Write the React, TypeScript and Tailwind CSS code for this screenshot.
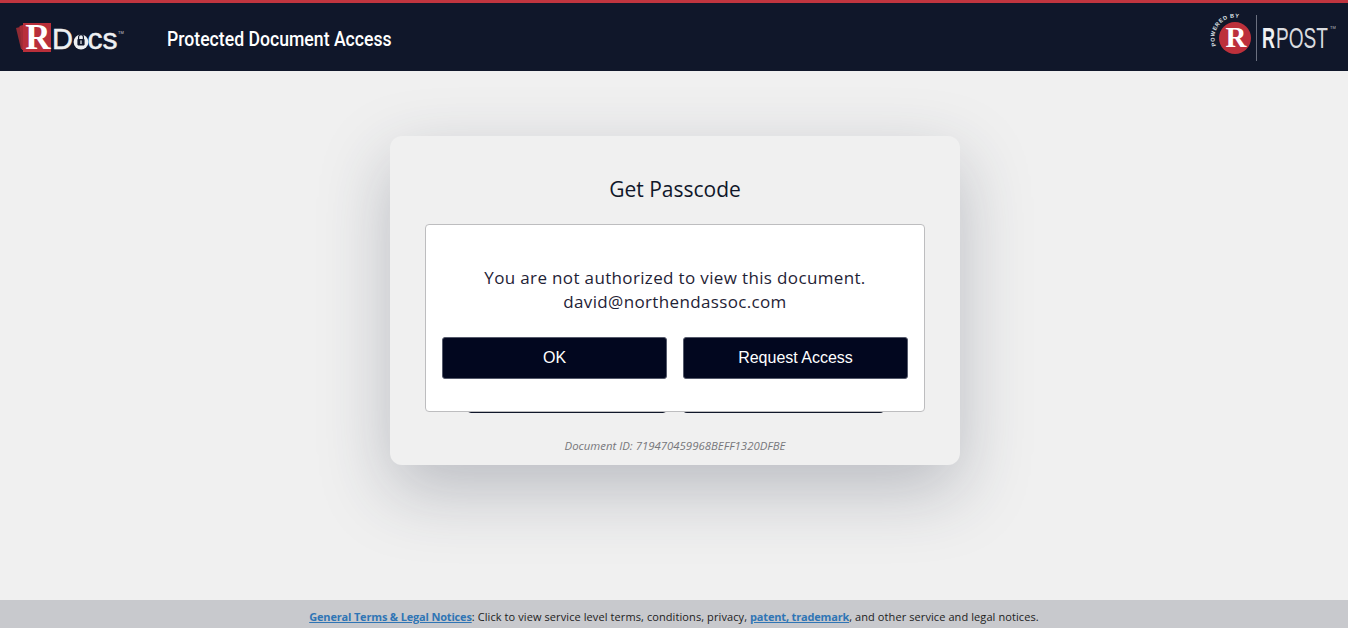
import React from 'react';

const RDocsLogo: React.FC = () => (
  <svg width="110" height="30" viewBox="0 0 110 30" className="mt-[2px] block">
    <path d="M0 5 L4 4 L7 26 L5 26 Z" fill="#8f2a33" />
    <path d="M3.5 3 L7 2 L7 27 L6 27 Z" fill="#a52c36" />
    <rect x="7" y="0" width="28" height="29" fill="#b92f3a" />
    <text x="22" y="25.5" textAnchor="middle" fontFamily="'Liberation Serif', serif" fontWeight="700" fontSize="35" fill="#ffffff">R</text>
    <text x="36" y="25.5" fontFamily="'Liberation Sans', sans-serif" fontSize="29" fill="#eef0f2" stroke="#eef0f2" strokeWidth="0.5">D</text>
    <circle cx="65" cy="19" r="7.4" fill="#eef0f2" />
    <path d="M62.6 16 v-2 a2.4 2.4 0 0 1 4.8 0 v2" fill="none" stroke="#10172a" strokeWidth="1.2" />
    <rect x="61.4" y="16" width="7.2" height="6.4" rx="0.8" fill="#10172a" />
    <rect x="64.4" y="17.4" width="1.2" height="3.6" fill="#eef0f2" />
    <text x="71.5" y="25.5" fontFamily="'Liberation Sans', sans-serif" fontSize="30" fill="#eef0f2" stroke="#eef0f2" strokeWidth="0.5">cs</text>
    <text x="102" y="11" fontFamily="'Liberation Sans', sans-serif" fontSize="4" fill="#c9ccd2">TM</text>
  </svg>
);

const RPostLogo: React.FC = () => (
  <svg width="130" height="56" viewBox="0 0 130 56" className="block">
    <defs>
      <path id="poweredArc" d="M10 36.8 A20.5 20.5 0 0 1 36 9.8" fill="none" />
    </defs>
    <text fontFamily="'Liberation Sans', sans-serif" fontWeight="700" fontSize="5.6" letterSpacing="0.6" fill="#dfe1e5">
      <textPath href="#poweredArc">POWERED BY</textPath>
    </text>
    <circle cx="29" cy="29" r="16" fill="#bd303b" />
    <text x="30" y="38" textAnchor="middle" fontFamily="'Liberation Serif', serif" fontWeight="700" fontSize="29" fill="#ffffff">R</text>
    <rect x="50" y="6" width="1" height="46" fill="#6b7080" />
    <text x="56" y="39" fontFamily="'Liberation Sans', sans-serif" fontWeight="700" fontSize="29" fill="#f0f1f3" textLength="13" lengthAdjust="spacingAndGlyphs">R</text>
    <text x="70" y="39" fontFamily="'Liberation Sans', sans-serif" fontSize="29" fill="#d9dbdf" textLength="52" lengthAdjust="spacingAndGlyphs">POST</text>
    <text x="124" y="20" fontFamily="'Liberation Sans', sans-serif" fontSize="4" fill="#b9bcc3">TM</text>
  </svg>
);

const App: React.FC = () => {
  return (
    <div className="flex h-screen flex-col overflow-hidden bg-[#f0f0f0] font-['Open_Sans',sans-serif]">
      <header className="flex h-[71px] shrink-0 items-center justify-between border-t-[3px] border-[#c0353f] bg-[#10172a] pl-[16px] pr-[12px]">
        <div className="flex items-center">
          <RDocsLogo />
          <h1 className="ml-[41px] mt-[4px] origin-left scale-x-[0.84] whitespace-nowrap font-['Roboto',sans-serif] text-[21px] font-medium leading-[28px] text-white">
            Protected Document Access
          </h1>
        </div>
        <RPostLogo />
      </header>

      <main className="flex flex-1 flex-col items-center pl-[2px] pt-[65px]">
        <div className="relative flex h-[329px] w-[570px] flex-col items-center rounded-xl bg-[#f0f0f0] shadow-[0_25px_70px_rgba(40,48,70,0.27)]">
          <h2 className="mt-[37px] text-[21px] leading-[32px] text-[#10172a]">Get Passcode</h2>

          {/* buttons of the form behind the dialog */}
          <div className="mt-[171px] flex gap-[16px]">
            <div className="h-[37px] w-[200px] rounded border border-[#10172a] bg-[#f0f0f0]" />
            <div className="h-[37px] w-[201px] rounded bg-[#10172a]" />
          </div>

          <p className="mb-[11px] mt-auto text-[11.4px] italic leading-[16px] text-[#77777b]">
            Document ID: 719470459968BEFF1320DFBE
          </p>

          <div className="absolute left-[35px] top-[88px] flex h-[188px] w-[500px] flex-col rounded border border-[#bdbdbf] bg-white px-[16px] pt-[41px]">
            <p className="text-center text-[17px] leading-[24px] tracking-[0.35px] text-[#1f2336]">
              You are not authorized to view this document.
              <br />
              david@northendassoc.com
            </p>
            <div className="mt-[23px] flex gap-[16px]">
              <button className="h-[42px] flex-1 rounded-[3px] border border-[#555a6b] bg-[#02071f] font-['Liberation_Sans',sans-serif] text-[16px] text-white">
                OK
              </button>
              <button className="h-[42px] flex-1 rounded-[3px] border border-[#555a6b] bg-[#02071f] font-['Liberation_Sans',sans-serif] text-[16px] text-white">
                Request Access
              </button>
            </div>
          </div>
        </div>
      </main>

      <footer className="flex h-[28px] shrink-0 items-center justify-center bg-[#c8c9cd] pt-[6px] text-[11px] leading-[16px] tracking-[0.09px] text-[#1c1c1c]">
        <p>
          <a className="font-bold tracking-[-0.17px] text-[#2f75b5] underline">General Terms &amp; Legal Notices</a>
          : Click to view service level terms, conditions, privacy,{' '}
          <a className="font-bold tracking-[-0.17px] text-[#2f75b5] underline">patent, trademark</a>
          , and other service and legal notices.
        </p>
      </footer>
    </div>
  );
};

export default App;
